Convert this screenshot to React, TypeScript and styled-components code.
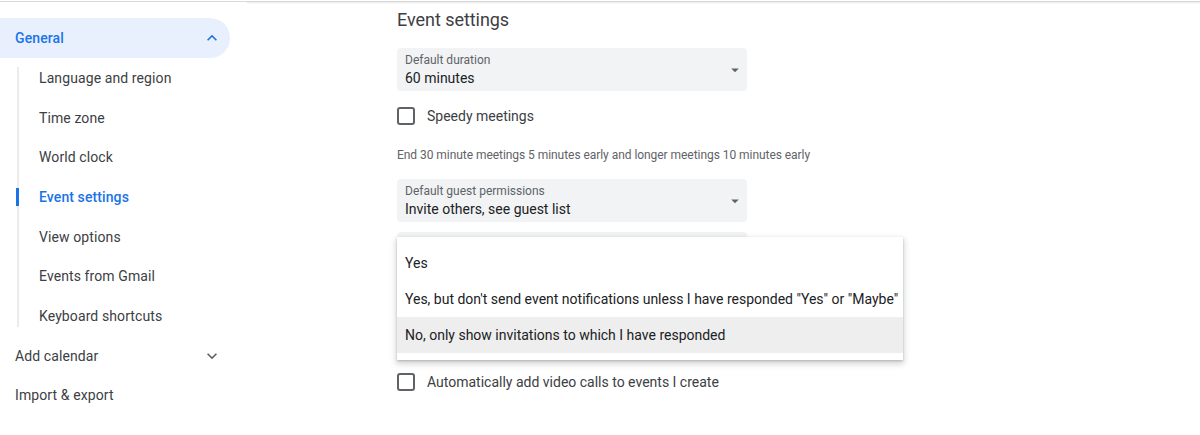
import React from "react";
import styled, { createGlobalStyle, css } from "styled-components";

const Global = createGlobalStyle`
  html, body { margin: 0; padding: 0; background: #fff; }
  body { font-family: Roboto, "Noto Sans", Arial, sans-serif; color: #3c4043; -webkit-font-smoothing: antialiased; }
  * { box-sizing: border-box; }
`;

const Page = styled.div`
  width: 1200px;
  height: 435px;
  overflow: hidden;
`;

const TopBar = styled.div`
  display: flex;
  margin-top: 1px;
  height: 3px;
  border-top: 1px solid #d9d9d9;
`;

const TopPlain = styled.div`
  width: 247px;
`;

const TopShadow = styled.div`
  flex: 1;
  background: linear-gradient(rgba(0, 0, 0, 0.09), rgba(0, 0, 0, 0));
`;

const Layout = styled.div`
  display: grid;
  grid-template-columns: 230px 1fr;
  column-gap: 167px;
`;

const Sidebar = styled.nav`
  padding-top: 14.4px;
  display: flex;
  flex-direction: column;
`;

const NavRow = styled.div<{ $active?: boolean }>`
  height: 39.7px;
  display: flex;
  align-items: center;
  justify-content: space-between;
  padding: 0 8px 0 15px;
  font-size: 14px;
  letter-spacing: 0.1px;
  color: #3c4043;
  ${(p) =>
    p.$active &&
    css`
      background: #e8f0fe;
      border-radius: 0 20px 20px 0;
      color: #1a73e8;
      font-weight: 500;
    `}
`;

const Chevron = styled.svg<{ $color: string }>`
  width: 20px;
  height: 20px;
  fill: ${(p) => p.$color};
`;

const SubList = styled.div`
  position: relative;
  margin-left: 17px;
  &::before {
    content: "";
    position: absolute;
    left: 0;
    top: 9px;
    bottom: 9px;
    width: 2px;
    background: #ebebeb;
  }
`;

const SubItem = styled.div<{ $active?: boolean }>`
  position: relative;
  height: 39.7px;
  display: flex;
  align-items: center;
  padding-left: 22px;
  font-size: 14px;
  letter-spacing: 0.1px;
  color: ${(p) => (p.$active ? "#1a73e8" : "#3c4043")};
  font-weight: ${(p) => (p.$active ? 500 : 400)};
  ${(p) =>
    p.$active &&
    css`
      &::before {
        content: "";
        position: absolute;
        left: -1px;
        top: 11px;
        height: 18px;
        width: 3px;
        background: #1a73e8;
      }
    `}
`;

const Main = styled.main`
  padding-top: 4px;
  display: flex;
  flex-direction: column;
  width: 506px;
`;

const Title = styled.h2`
  margin: 0;
  font-size: 18px;
  line-height: 24px;
  font-weight: 400;
  color: #3c4043;
  letter-spacing: -0.05px;
`;

const SelectWrap = styled.div<{ $mt: number }>`
  position: relative;
  margin-top: ${(p) => p.$mt}px;
  width: 350px;
`;

const SelectBox = styled.div`
  height: 43px;
  background: #f1f3f4;
  border-radius: 4px;
  display: flex;
  align-items: center;
  justify-content: space-between;
  padding: 0 3px 0 8px;
`;

const SelectText = styled.div`
  display: flex;
  flex-direction: column;
  padding-top: 1px;
`;

const SelectLabel = styled.span`
  font-size: 12px;
  line-height: 16px;
  color: #5f6368;
`;

const SelectValue = styled.span`
  font-size: 14px;
  line-height: 20px;
  color: #202124;
`;

const Arrow = styled.svg`
  width: 18px;
  height: 18px;
  fill: #5f6368;
`;

const CheckRow = styled.label<{ $mt: number }>`
  margin-top: ${(p) => p.$mt}px;
  height: 24px;
  display: flex;
  align-items: center;
  gap: 12px;
  font-size: 14px;
  color: #3c4043;
`;

const CheckBox = styled.span`
  width: 18px;
  height: 18px;
  border: 2px solid #5f6368;
  border-radius: 3px;
  flex: none;
`;

const Helper = styled.div`
  margin-top: 19px;
  font-size: 12px;
  line-height: 16px;
  letter-spacing: -0.05px;
  color: #5f6368;
`;

const Menu = styled.div`
  position: absolute;
  left: 0;
  top: 5px;
  width: 506px;
  background: #fff;
  padding: 8px 0 7px;
  box-shadow: 0 3px 6px 1px rgba(60, 64, 67, 0.22), 0 1px 2px rgba(60, 64, 67, 0.25);
  z-index: 2;
`;

const MenuItem = styled.div<{ $hover?: boolean }>`
  height: 36px;
  display: flex;
  align-items: center;
  padding-left: 8px;
  font-size: 14px;
  color: #202124;
  white-space: nowrap;
  background: ${(p) => (p.$hover ? "#eeeeee" : "transparent")};
`;

const ChevronUp = () => (
  <Chevron $color="#1a73e8" viewBox="0 0 24 24">
    <path d="M12 8l-6 6 1.41 1.41L12 10.83l4.59 4.58L18 14z" />
  </Chevron>
);

const ChevronDown = () => (
  <Chevron $color="#5f6368" viewBox="0 0 24 24">
    <path d="M16.59 8.59L12 13.17 7.41 8.59 6 10l6 6 6-6z" />
  </Chevron>
);

const DropArrow = () => (
  <Arrow viewBox="0 0 24 24">
    <path d="M7 10l5 5 5-5z" />
  </Arrow>
);

const subItems = [
  "Language and region",
  "Time zone",
  "World clock",
  "Event settings",
  "View options",
  "Events from Gmail",
  "Keyboard shortcuts",
];

const menuItems = [
  "Yes",
  'Yes, but don\'t send event notifications unless I have responded "Yes" or "Maybe"',
  "No, only show invitations to which I have responded",
];

export default function App() {
  return (
    <Page>
      <Global />
      <TopBar>
        <TopPlain />
        <TopShadow />
      </TopBar>
      <Layout>
        <Sidebar>
          <NavRow $active>
            <span>General</span>
            <ChevronUp />
          </NavRow>
          <SubList>
            {subItems.map((s) => (
              <SubItem key={s} $active={s === "Event settings"}>
                {s}
              </SubItem>
            ))}
          </SubList>
          <NavRow>
            <span>Add calendar</span>
            <ChevronDown />
          </NavRow>
          <NavRow>
            <span>Import &amp; export</span>
          </NavRow>
        </Sidebar>
        <Main>
          <Title>Event settings</Title>
          <SelectWrap $mt={16}>
            <SelectBox>
              <SelectText>
                <SelectLabel>Default duration</SelectLabel>
                <SelectValue>60 minutes</SelectValue>
              </SelectText>
              <DropArrow />
            </SelectBox>
          </SelectWrap>
          <CheckRow $mt={13}>
            <CheckBox />
            Speedy meetings
          </CheckRow>
          <Helper>End 30 minute meetings 5 minutes early and longer meetings 10 minutes early</Helper>
          <SelectWrap $mt={16}>
            <SelectBox>
              <SelectText>
                <SelectLabel>Default guest permissions</SelectLabel>
                <SelectValue>Invite others, see guest list</SelectValue>
              </SelectText>
              <DropArrow />
            </SelectBox>
          </SelectWrap>
          <SelectWrap $mt={10}>
            <SelectBox>
              <SelectText>
                <SelectLabel>Add invitations to my calendar</SelectLabel>
                <SelectValue>Yes</SelectValue>
              </SelectText>
              <DropArrow />
            </SelectBox>
            <Menu>
              {menuItems.map((m, i) => (
                <MenuItem key={i} $hover={i === 2}>
                  {m}
                </MenuItem>
              ))}
            </Menu>
          </SelectWrap>
          <CheckRow $mt={95}>
            <CheckBox />
            Automatically add video calls to events I create
          </CheckRow>
        </Main>
      </Layout>
    </Page>
  );
}
